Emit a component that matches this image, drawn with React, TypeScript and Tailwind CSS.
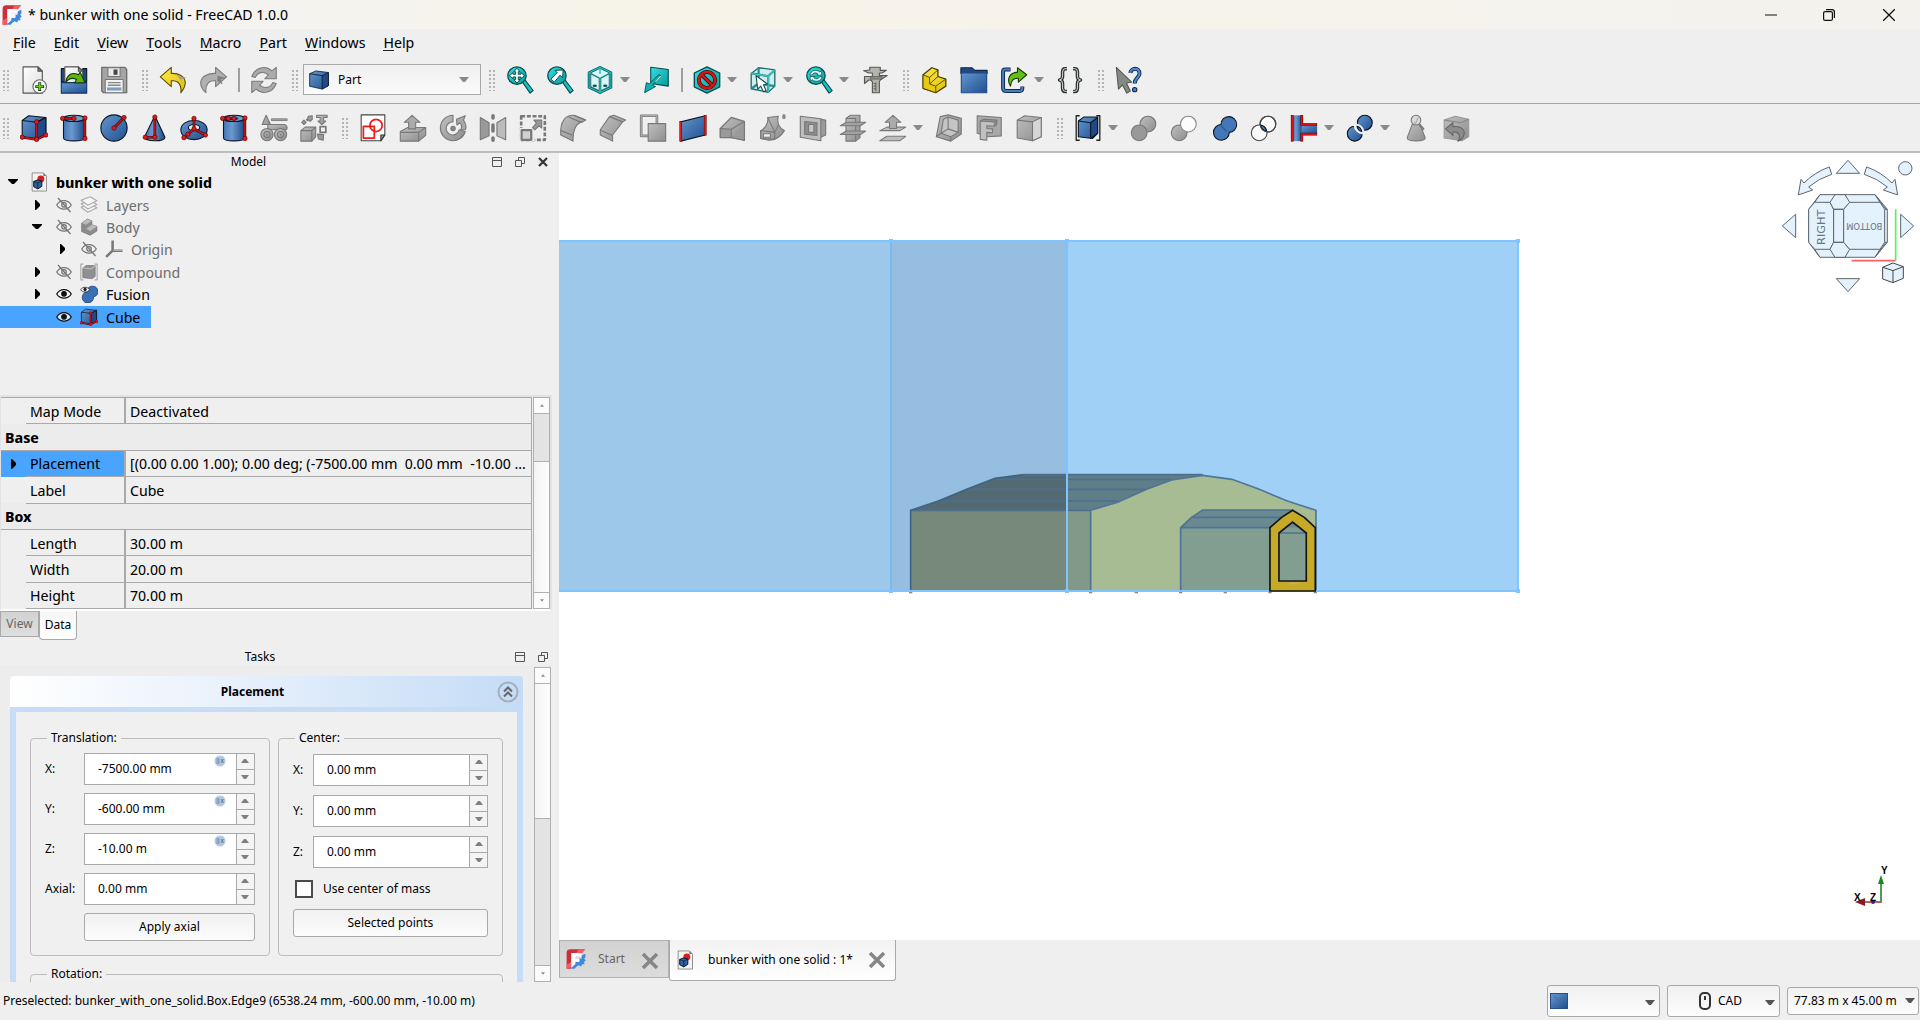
import React from "react";

type Kids = { children?: React.ReactNode };

const INK = "#0b1521";
const OFF = "#787878";

function Defs() {
  return (
    <svg className="absolute h-0 w-0" aria-hidden="true">
      <defs>
        <linearGradient id="blue" x1="0" y1="0" x2="1" y2="1">
          <stop offset="0" stopColor="#6497cf" />
          <stop offset="1" stopColor="#204f8f" />
        </linearGradient>
        <linearGradient id="blueH" x1="0" y1="0" x2="1" y2="0">
          <stop offset="0" stopColor="#4576b5" />
          <stop offset="0.4" stopColor="#6a9ad0" />
          <stop offset="1" stopColor="#204a87" />
        </linearGradient>
        <linearGradient id="grey" x1="0" y1="0" x2="1" y2="1">
          <stop offset="0" stopColor="#c0c0c0" />
          <stop offset="1" stopColor="#8d8d8d" />
        </linearGradient>
        <linearGradient id="teal" x1="0" y1="0" x2="1" y2="1">
          <stop offset="0" stopColor="#34e0e2" />
          <stop offset="1" stopColor="#069a9c" />
        </linearGradient>
        <linearGradient id="page" x1="0" y1="0" x2="1" y2="1">
          <stop offset="0" stopColor="#ffffff" />
          <stop offset="1" stopColor="#dcdcdc" />
        </linearGradient>
        <linearGradient id="yellow" x1="0" y1="0" x2="1" y2="1">
          <stop offset="0" stopColor="#fce94f" />
          <stop offset="1" stopColor="#e3c200" />
        </linearGradient>
      </defs>
    </svg>
  );
}

function Svg({ children, size = "size-7" }: Kids & { size?: string }) {
  return (
    <svg viewBox="0 0 64 64" className={`${size} shrink-0`} fill="none" strokeWidth="2.5" strokeLinejoin="round" aria-hidden="true">
      {children}
    </svg>
  );
}

function RedPath({ d, dots }: { d: string; dots: number[][] }) {
  return (
    <>
      <path d={d} stroke="#3a0606" strokeWidth="6" />
      <path d={d} stroke="#cc1414" strokeWidth="3.5" />
      {dots.map(([x, y], i) => (
        <circle key={i} cx={x} cy={y} r="5" fill="#e01b1b" stroke="#5a0000" strokeWidth="1.5" />
      ))}
    </>
  );
}

/* ---------- file and view icons ---------- */

const NewIcon = () => (
  <Svg>
    <path d="M7 2H41L51 12V62H7Z" fill="url(#page)" stroke="#555" />
    <path d="M41 2V12H51Z" fill="#777" stroke="#555" />
    <circle cx="45" cy="47" r="15.5" fill="#f4f4f4" stroke="#666" />
    <path d="M45 37V57M35 47H55" stroke="#173a04" strokeWidth="6.5" />
    <path d="M45 39V55M37 47H53" stroke="#73d216" strokeWidth="3.5" />
  </Svg>
);
const OpenIcon = () => (
  <Svg>
    <path d="M3 6H12V36H3ZM52 6H61V36H52Z" fill="#204a87" stroke={INK} />
    <path d="M11 2H42L52 12V44H11Z" fill="url(#page)" stroke="#555" />
    <path d="M42 2V12H52Z" fill="#888" stroke="#555" />
    <path d="M3 38H61V62H3Z" fill="url(#blue)" stroke="#143463" />
    <path d="M13 38C15 22 26 12 42 20L46 14L57 38L33 39L38 31C27 25 19 29 13 38Z" fill="#5cb512" stroke="#173a04" />
  </Svg>
);
const SaveIcon = () => (
  <Svg>
    <path d="M4 3H57L61 8V61H8L4 57Z" fill="#a5a5a5" stroke="#6e6e6e" strokeWidth="3" />
    <rect x="18" y="4" width="28" height="20" fill="#e8e8e8" stroke="#777" />
    <rect x="31" y="8" width="9" height="12" fill="#444" />
    <rect x="12" y="31" width="41" height="30" fill="#f2f2f2" stroke="#777" />
    <path d="M18 38H47M18 44H47" stroke="#888" strokeWidth="3" />
    <rect x="16" y="49" width="33" height="7" fill="#7d9cc4" />
  </Svg>
);
const UndoIcon = () => (
  <Svg>
    <path d="M28 3L3 25L28 47V34C44 32 52 42 50 61C54 56 61 46 60 36C58 24 46 16 28 17Z" fill="url(#yellow)" stroke="#5a4d00" />
    <path d="M40 20L63 27L50 31L56 42Z" fill="#999" opacity="0.8" />
  </Svg>
);
const RedoIcon = () => (
  <Svg>
    <path d="M38 3L63 25L38 47V34C22 32 14 42 16 61C10 56 3 46 4 36C6 24 20 16 38 17Z" fill="#b0b0b0" stroke="#7c7c7c" />
    <path d="M42 22L62 27L50 31L54 42L42 34Z" fill="#808080" />
  </Svg>
);
const RefreshIcon = () => (
  <Svg>
    <path d="M4 24C12 2 36 -2 50 11L60 3V29H34L42 20C30 11 18 14 12 26Z" fill="#ababab" stroke="#7c7c7c" />
    <path d="M60 40C52 62 28 66 14 53L4 61V35H30L22 44C34 53 46 50 52 38Z" fill="#ababab" stroke="#7c7c7c" />
  </Svg>
);

function Lens({ children }: Kids) {
  return (
    <Svg>
      <path d="M36 34L42 30L62 56L55 62Z" fill="#16c5c8" stroke="#064b4c" />
      <ellipse cx="25" cy="22" rx="21" ry="20" fill="url(#teal)" stroke="#064b4c" strokeWidth="3" />
      {children}
    </Svg>
  );
}
const FitAllIcon = () => (
  <Lens>
    <path d="M25 5L32 13H28V19H34V15L42 22L34 29V25H28V31H32L25 39L18 31H22V25H16V29L8 22L16 15V19H22V13H18Z" fill="#fff" stroke="#053b3c" strokeWidth="2" />
  </Lens>
);
const FitSelIcon = () => (
  <Lens>
    <path d="M39 9L38 27L32 21L19 37L11 30L26 15L20 10Z" fill="#fff" stroke="#053b3c" strokeWidth="2" />
  </Lens>
);
const SyncViewIcon = () => (
  <Lens>
    <path d="M11 20C13 10 27 7 34 14L38 10V21H27L30 18C25 14 19 15 16 21ZM39 25C37 35 23 38 16 31L12 35V24H23L20 27C25 31 31 30 34 24Z" fill="#e8ffff" stroke="#053b3c" strokeWidth="1.5" />
  </Lens>
);
const IsoIcon = () => (
  <Svg>
    <path d="M32 3L57 15V49L32 61L7 49V15Z" fill="#d9f7f7" stroke="#054a4c" strokeWidth="6" />
    <path d="M32 3L57 15V49L32 61L7 49V15ZM7 15L32 28L57 15M32 28V61M32 3V18" stroke="#17b9bc" strokeWidth="3" />
    <path d="M11 18L30 28V56L11 47Z M34 28L53 18V47L34 56Z" stroke="#054a4c" strokeWidth="1.5" />
    <ellipse cx="20" cy="45" rx="5" ry="3" fill="#06595b" />
    <ellipse cx="44" cy="45" rx="5" ry="3" fill="#06595b" />
  </Svg>
);
const AlignIcon = () => (
  <Svg>
    <path d="M20 3L60 8V46L20 40Z" fill="url(#teal)" stroke="#054a4c" />
    <path d="M44 22L24 44L31 47L6 61L10 38L17 41L38 20Z" fill="#0fb1b4" stroke="#054a4c" strokeWidth="2" />
    <path d="M31 36L44 22" stroke="#eaffff" strokeWidth="2" />
  </Svg>
);
const DrawStyleIcon = () => (
  <Svg>
    <path d="M32 2L61 16V48L32 62L3 48V16Z" fill="url(#teal)" stroke="#054a4c" strokeWidth="3" />
    <circle cx="32" cy="32" r="18.500" stroke="#3a0606" strokeWidth="9" />
    <path d="M19 19L45 45" stroke="#3a0606" strokeWidth="9" />
    <circle cx="32" cy="32" r="18.500" stroke="#d11515" strokeWidth="6" />
    <path d="M19 19L45 45" stroke="#d11515" strokeWidth="6" />
  </Svg>
);
const BoxSelectIcon = () => (
  <Svg>
    <path d="M5 17L22 4L59 9V46L44 60L5 52Z" fill="#cfeeee" stroke="#1c6a6b" strokeWidth="3" />
    <path d="M5 17L44 23L59 9M44 23V60M22 4V40L5 52M22 40L59 46" stroke="#2a8b8d" strokeWidth="5" />
    <path d="M5 17L44 23L59 9M44 23V60" stroke="#45c8ca" strokeWidth="2.500" />
    <path d="M16 22L20 53L27 46L33 59L39 56L33 43L42 41Z" fill="#fff" stroke="#174d4e" />
  </Svg>
);
const CaliperIcon = () => (
  <Svg>
    <path d="M20 3H44V10H58L48 16H42V22H60L44 32L42 36V61H26V36L22 32H18L8 40V24H26V16H18L6 11L20 9Z" fill="#b4b4ac" stroke="#555753" />
    <path d="M34 38V58M29 40H34M29 46H34M29 52H34" stroke="#555753" strokeWidth="2" />
    <path d="M22 24H48V30H22Z" fill="#8a8a84" stroke="#555753" strokeWidth="1.500" />
  </Svg>
);
const StdPartIcon = () => (
  <Svg>
    <path d="M7 20L27 4L41 9V24L59 30V46L36 61L7 51Z" fill="url(#yellow)" stroke="#4a4000" strokeWidth="3" />
    <path d="M7 20L22 26V41L36 46V61L7 51Z" fill="#e6cb10" stroke="#4a4000" strokeWidth="2" />
    <path d="M22 26L41 9M36 46L59 30M22 41L41 24" stroke="#4a4000" strokeWidth="2" />
  </Svg>
);
const GroupIcon = () => (
  <Svg>
    <path d="M2 4H27L34 10H62V17H2Z" fill="#204a87" stroke="#10284a" />
    <rect x="3" y="16" width="58" height="45" fill="url(#blue)" stroke="#204a87" />
  </Svg>
);
const LinkIcon = () => (
  <Svg>
    <path d="M24 8H12Q7 8 7 13V50Q7 57 14 57H45Q51 57 51 51V47" stroke="#0e2a50" strokeWidth="9" />
    <path d="M24 8H12Q7 8 7 13V50Q7 57 14 57H45Q51 57 51 51V47" stroke="#4a7ebb" strokeWidth="4.500" />
    <path d="M40 4L61 20L42 37V28C30 27 25 36 24 46C14 30 22 15 40 14Z" fill="#64bf14" stroke="#173a04" />
  </Svg>
);
const BracesIcon = () => (
  <Svg>
    {["#2e3436", "#eeeeec"].map((c, i) => (
      <path key={c} d="M25 6H21Q15 6 15 14V23Q15 32 8 32Q15 32 15 41V50Q15 58 21 58H25M39 6H43Q49 6 49 14V23Q49 32 56 32Q49 32 49 41V50Q49 58 43 58H39" stroke={c} strokeWidth={i ? 2 : 8} />
    ))}
  </Svg>
);
const WhatsThisIcon = () => (
  <Svg>
    <path d="M3 3L8 53L17 43L27 62L35 57L26 39L38 37Z" fill="#868a86" stroke="#555753" />
    <path d="M35 16C36 4 56 2 56 17C56 27 45 27 45 40" stroke="#10284a" strokeWidth="9" />
    <path d="M35 16C36 4 56 2 56 17C56 27 45 27 45 40" stroke="#4f86c6" strokeWidth="5" />
    <circle cx="45" cy="54" r="5" fill="#4f86c6" stroke="#10284a" />
  </Svg>
);

/* ---------- part workbench icons ---------- */

const CubeIcon = ({ size }: { size?: string }) => (
  <Svg size={size}>
    <path d="M5 15L20 4L59 8V47L38 59L5 52Z" fill="url(#blue)" stroke={INK} />
    <path d="M38 19L59 8V47L38 59Z" fill="#204a87" stroke={INK} />
    <path d="M5 15L38 19L59 8" stroke={INK} />
    <RedPath d="M38 18V58M5 53L38 58L59 48" dots={[[38, 18], [5, 53], [38, 58], [59, 48]]} />
  </Svg>
);
const CylinderIcon = () => (
  <Svg>
    <path d="M8 10V54C8 64 56 64 56 54V10Z" fill="url(#blueH)" stroke={INK} />
    <ellipse cx="32" cy="10" rx="24" ry="7" fill="#729fcf" stroke={INK} />
    <RedPath d="M6 10H32M57 9V56" dots={[[6, 10], [32, 10], [57, 9], [57, 56]]} />
  </Svg>
);
const SphereIcon = () => (
  <Svg>
    <circle cx="32" cy="32" r="30" fill="url(#blue)" stroke={INK} />
    <RedPath d="M32 32L55 8" dots={[[32, 32], [55, 8]]} />
  </Svg>
);
const ConeIcon = () => (
  <Svg>
    <path d="M34 4L57 53C57 64 12 64 10 53Z" fill="url(#blueH)" stroke={INK} />
    <RedPath d="M34 7V53H12" dots={[[34, 7], [34, 53], [12, 53]]} />
  </Svg>
);
const TorusIcon = () => (
  <Svg>
    <path d="M2 36C2 8 62 8 62 36C62 66 2 66 2 36Z" fill="url(#blue)" stroke={INK} />
    <ellipse cx="32" cy="31" rx="13" ry="7" fill="#efefef" stroke={INK} />
    <RedPath d="M32 10V34L9 54M32 34L58 48" dots={[[32, 10], [32, 34], [9, 54], [58, 48], [18, 46]]} />
  </Svg>
);
const TubeIcon = () => (
  <Svg>
    <path d="M8 10V54C8 64 56 64 56 54V10Z" fill="url(#blueH)" stroke={INK} />
    <ellipse cx="32" cy="10" rx="24" ry="7" fill="#729fcf" stroke={INK} />
    <ellipse cx="30" cy="10" rx="12" ry="4" fill="#1c3f72" />
    <RedPath d="M6 10H32M57 9V56" dots={[[6, 10], [19, 10], [32, 10], [57, 9], [57, 56]]} />
  </Svg>
);
const PrimitivesIcon = () => (
  <Svg>
    <path d="M14 3L24 24H5Z" fill="url(#grey)" stroke={OFF} />
    <rect x="26" y="11" width="36" height="4" fill="#aaa" stroke={OFF} strokeWidth="2" />
    <path d="M18 24H56Q62 26 62 32T52 36H18Z" fill="url(#grey)" stroke={OFF} />
    <circle cx="16" cy="47" r="14" fill="url(#grey)" stroke={OFF} />
    <circle cx="47" cy="47" r="14" fill="url(#grey)" stroke={OFF} />
    <circle cx="16" cy="47" r="7" stroke={OFF} />
    <circle cx="47" cy="47" r="7" stroke={OFF} />
    <circle cx="16" cy="47" r="2" fill={OFF} />
    <circle cx="47" cy="47" r="2" fill={OFF} />
  </Svg>
);
const ShapeBuilderIcon = () => (
  <Svg>
    <path d="M2 38L12 30H36V52L27 62H2Z" fill="url(#grey)" stroke={OFF} />
    <path d="M2 38H27V62M27 38L36 30" stroke={OFF} />
    <path d="M9 14L14 19L9 24L4 19ZM14 12L18 16M19 5L28 4V12L23 17L17 12Z" fill="#999" stroke={OFF} />
    <path d="M38 3H62V8H54V16H59L50 24L41 16H46V8H38Z" fill="url(#grey)" stroke={OFF} />
    <rect x="46" y="29" width="13" height="13" stroke={OFF} strokeWidth="4" />
    <path d="M40 46L54 47L53 60L42 57Z" fill="#999" stroke={OFF} />
  </Svg>
);
const SketchIcon = () => (
  <Svg>
    <path d="M5 2H59V48L50 61H5Z" fill="#fff" stroke="#444" />
    <path d="M59 48H50V61Z" fill="#8a9a88" stroke="#333" />
    <rect x="10" y="28" width="25" height="27" stroke="#ee1c1c" strokeWidth="4" />
    <circle cx="39" cy="26" r="14" stroke="#ee1c1c" strokeWidth="4" />
  </Svg>
);
const ExtrudeIcon = () => (
  <Svg>
    <path d="M3 40L20 31H61V49L45 62H3Z" fill="url(#grey)" stroke={OFF} />
    <path d="M3 42H45V62M45 42L61 31" stroke={OFF} />
    <path d="M30 3L48 19H38V34H22V19H12Z" fill="#ababab" stroke={OFF} />
  </Svg>
);
const RevolveIcon = () => (
  <Svg>
    <path d="M32 3V18A15 15 0 1 0 46 36L60 40A29 29 0 1 1 32 3Z" fill="url(#grey)" stroke={OFF} />
    <circle cx="32" cy="33" r="5" fill="#888" stroke={OFF} />
    <path d="M40 12L60 4L56 14Q65 27 60 36H50Q54 27 48 20L41 25Z" fill="#aaa" stroke={OFF} />
  </Svg>
);
const MirrorIcon = () => (
  <Svg>
    <path d="M3 8L23 20V50L3 59Z" fill="#999" stroke={OFF} />
    <path d="M61 8L41 20V50L61 59Z" fill="#bcbcbc" stroke={OFF} />
    <path d="M32 4V9M32 25V39M32 55V60" stroke={OFF} strokeWidth="8" strokeLinecap="round" />
  </Svg>
);
const ScaleIcon = () => (
  <Svg>
    <rect x="5" y="5" width="54" height="54" stroke={OFF} strokeWidth="6" strokeDasharray="9 4" />
    <path d="M2 32H36V62H2Z" fill="#efefef" />
    <rect x="6" y="37" width="22" height="22" fill="#d0d0d0" stroke={OFF} strokeWidth="5" />
    <path d="M34 14H52V32L46 27L36 36L31 31L40 21Z" fill="#999" stroke={OFF} />
  </Svg>
);
const FilletIcon = () => (
  <Svg>
    <path d="M4 48C2 18 14 2 34 3L61 14L54 18C40 20 32 32 32 62Z" fill="url(#grey)" stroke={OFF} />
    <path d="M4 38L30 48M22 7L48 18L54 18M34 3L61 14" stroke={OFF} />
  </Svg>
);
const ChamferIcon = () => (
  <Svg>
    <path d="M3 48V36L24 6L34 3L61 14L54 18L31 48V62Z" fill="url(#grey)" stroke={OFF} />
    <path d="M3 37L31 49M24 6L54 18" stroke={OFF} />
  </Svg>
);
const FaceIcon = () => (
  <Svg>
    <rect x="5" y="4" width="36" height="46" stroke={OFF} strokeWidth="6" />
    <rect x="5" y="4" width="36" height="46" stroke="#c4c4c4" strokeWidth="2" />
    <rect x="21" y="22" width="40" height="40" fill="url(#grey)" stroke={OFF} />
  </Svg>
);
const RuledIcon = () => (
  <Svg>
    <path d="M4 18L60 4V48L4 62Z" fill="url(#blue)" stroke={INK} />
    <path d="M4 16V63M60 2V49" stroke="#5a0000" strokeWidth="6" />
    <path d="M4 17V62M60 3V48" stroke="#e01b1b" strokeWidth="4" />
  </Svg>
);
const LoftIcon = () => (
  <Svg>
    <path d="M3 33L28 8L58 17V60L33 54L3 53Z" fill="url(#grey)" stroke={OFF} strokeWidth="3" />
    <path d="M3 33L28 35V54H3ZM28 35L58 17M58 17V60L28 54" fill="#9a9a9a" stroke={OFF} />
  </Svg>
);
const SweepIcon = () => (
  <Svg>
    <path d="M4 38C14 34 22 20 20 8L44 5C40 22 48 34 58 38C50 52 36 60 22 60L4 56Z" fill="url(#grey)" stroke={OFF} />
    <path d="M4 38L36 42V58L4 56ZM36 42L44 26M20 8L36 42" stroke={OFF} />
    <rect x="10" y="45" width="16" height="8" fill="#efefef" stroke={OFF} />
    <ellipse cx="57" cy="6" rx="4" ry="6" fill="#888" />
  </Svg>
);
const SectionIcon = () => (
  <Svg>
    <path d="M36 10L61 14V48L48 54Z" fill="#9a9a9a" stroke={OFF} />
    <path d="M3 5L50 11V61L3 53Z" fill="#bdbdbd" stroke={OFF} />
    <path d="M13 17L41 20V49L13 46Z" fill="#8d8d8d" stroke={OFF} />
    <path d="M22 24H34V42H22Z" fill="#c8c8c8" stroke={OFF} />
  </Svg>
);
const CrossSectionsIcon = () => (
  <Svg>
    <path d="M16 10L26 3H48V54L38 62H16Z" fill="url(#grey)" stroke={OFF} />
    {[19, 39].map((y) => (
      <path key={y} d={`M3 ${y + 8}L17 ${y}H61L49 ${y + 8}Z`} fill="#a2a2a2" stroke={OFF} />
    ))}
    <path d="M16 10H38V19M38 28V39M38 48V62" stroke={OFF} />
  </Svg>
);
const OffsetIcon = () => (
  <Svg>
    <path d="M2 38L18 30H61L48 38ZM2 61L18 51H61L48 61Z" fill="#bdbdbd" stroke={OFF} />
    <path d="M32 3L50 19H40V33H24V19H14Z" fill="#ababab" stroke={OFF} />
  </Svg>
);
const ThicknessIcon = () => (
  <Svg>
    <path d="M12 6L30 2L60 10V46L36 62L3 52Z" fill="url(#grey)" stroke={OFF} />
    <path d="M19 12L30 7L53 14V42L36 52L14 44ZM30 7V34L14 44M30 34L53 42" fill="#c4c4c4" stroke={OFF} />
    <path d="M3 52L14 44M36 62V52" stroke={OFF} />
  </Svg>
);
const ProjectionIcon = () => (
  <Svg>
    <path d="M5 4L60 8V50L30 52L5 44Z" fill="#a8a8a8" stroke={OFF} />
    <path d="M12 16L44 18V28L27 27V33L40 34V43L27 42V60L12 58Z" fill="#c0c0c0" stroke={OFF} />
    <path d="M44 18L50 14V24L44 28M12 16L20 12L50 14" fill="#8d8d8d" stroke={OFF} />
  </Svg>
);
const ColorFaceIcon = () => (
  <Svg>
    <path d="M5 14L22 4L60 8V52L40 61L5 55Z" fill="url(#grey)" stroke={OFF} />
    <path d="M40 18L60 8V52L40 61Z" fill="#d6d6d6" stroke={OFF} />
    <path d="M5 14L40 18" stroke={OFF} />
  </Svg>
);
const CompoundIcon = () => (
  <Svg>
    <path d="M13 4H5V60H13M51 4H59V60H51" stroke="#222" strokeWidth="3" />
    <path d="M10 16L22 7H54V44L42 56L10 52Z" fill="url(#blue)" stroke={INK} />
    <path d="M38 20L54 8V44L38 56Z" fill="#204a87" stroke={INK} />
    <path d="M10 16L38 20" stroke={INK} />
  </Svg>
);
const BooleanIcon = () => (
  <Svg>
    <circle cx="41" cy="23" r="18" fill="url(#grey)" stroke={OFF} />
    <circle cx="21" cy="43" r="18" fill="#999" stroke={OFF} />
  </Svg>
);
const CutIcon = () => (
  <Svg>
    <circle cx="21" cy="43" r="18" fill="url(#grey)" stroke={OFF} />
    <circle cx="42" cy="23" r="18" fill="#fcfcfc" stroke="#8a8a8a" />
  </Svg>
);
const UNION = "M25 24A18 18 0 1 1 44 42A18 18 0 1 1 25 24Z";
const UnionIcon = () => (
  <Svg>
    <path d={UNION} fill="#4377b8" stroke={INK} />
    <path d="M26 27L38 40" stroke="#2d5a96" strokeWidth="3" />
  </Svg>
);
const CommonIcon = () => (
  <Svg>
    <circle cx="41" cy="23" r="18" fill="#fafafa" stroke="#444" />
    <circle cx="21" cy="43" r="18" fill="#fafafa" stroke="#444" />
    <path d="M24 25A18 18 0 0 1 38 40A18 18 0 0 1 24 25Z" fill="#4377b8" stroke={INK} />
    <circle cx="41" cy="23" r="18" stroke="#444" />
  </Svg>
);
const JoinIcon = () => (
  <Svg>
    <path d="M27 24H62V46H27Z" fill="url(#blue)" />
    <path d="M5 3H27V62H5Z" fill="url(#blueH)" />
    <path d="M5 2V63M27 2V24H62M27 63V46H62" stroke="#5a0000" strokeWidth="6" strokeLinejoin="miter" />
    <path d="M5 3V62M27 3V24H61M27 62V46H61" stroke="#dd1111" strokeWidth="4" strokeLinejoin="miter" />
  </Svg>
);
const SplitIcon = () => (
  <Svg>
    <circle cx="43" cy="20" r="17" fill="url(#blue)" stroke={INK} />
    <circle cx="20" cy="45" r="17" fill="url(#blue)" stroke={INK} />
    <path d="M22 26A17 17 0 0 1 38 42A17 17 0 0 1 22 26Z" fill="#efefef" stroke="#efefef" strokeWidth="9" />
    <path d="M25 28A15 15 0 0 1 36 40A15 15 0 0 1 25 28Z" fill="#4377b8" stroke={INK} />
  </Svg>
);
const CheckGeomIcon = () => (
  <Svg>
    <path d="M24 22H40L53 54C53 64 12 64 12 54Z" fill="url(#grey)" stroke={OFF} />
    <path d="M40 24L50 36" stroke={OFF} strokeWidth="5" />
    <circle cx="32" cy="14" r="11" fill="#dadada" stroke={OFF} />
    <path d="M28 18L31 22L37 8" stroke="#aaa" />
  </Svg>
);
const DefeatureIcon = () => (
  <Svg>
    <path d="M5 14L30 5L61 12V52L45 61L5 55Z" fill="url(#grey)" stroke="#9a9a9a" />
    <path d="M5 14L44 20L61 12" stroke="#888" />
    <path d="M8 34L25 20V29C42 26 54 36 50 48C48 56 42 60 36 62C44 52 40 40 25 41V49Z" fill="#8c8c8c" stroke="#666" />
  </Svg>
);

/* ---------- small icons ---------- */

const AppLogo = () => (
  <Svg size="size-5">
    <path d="M14 1H60L50 14H18V60L14 63H2V12Q2 1 14 1Z" fill="#cb2f3a" />
    <path d="M40 1H62L50 14H32ZM2 50L18 40V56L8 63H2Z" fill="#ff585f" />
    <path d="M50 20L62 15V27L58 30L63 37L57 42L60 49L52 49L48 56L41 52L33 57L28 63H14L28 48V41H42V31H50Z" fill="#3f8ae0" />
    <path d="M17 13H50V24H30V31H43V41H30V48L17 60Z" fill="#fff" />
  </Svg>
);
const DocIcon = () => (
  <Svg size="size-5">
    <path d="M10 3H46L56 13V61H10Z" fill="#f4f4ee" stroke="#777" />
    <path d="M46 3V13H56Z" fill="#777" />
    <circle cx="38" cy="22" r="11" fill="#d81e1e" />
    <path d="M15 30L28 25L41 29V46L28 54L15 47Z" fill="#2c5fa5" stroke={INK} strokeWidth="3" />
    <path d="M15 30L28 35L41 29M28 35V54" stroke={INK} strokeWidth="2" />
  </Svg>
);
const EyeIcon = ({ off = false }: { off?: boolean }) => (
  <Svg size="size-4">
    <g opacity={off ? 0.55 : 1}>
      <path d="M3 32C16 8 48 8 61 32C48 54 16 54 3 32Z" fill={off ? "none" : "#fff"} fillOpacity="0.75" stroke="#111" strokeWidth="5" />
      <circle cx="32" cy="31" r="9" fill={off ? "none" : "#111"} stroke="#111" strokeWidth="5" />
      {off && <path d="M8 4L58 60" stroke="#111" strokeWidth="5" />}
    </g>
  </Svg>
);
const LayersIcon = () => (
  <Svg size="size-[18px]">
    {[44, 32, 19].map((y) => (
      <path key={y} d={`M4 ${y - 4}L36 ${y - 16}L60 ${y - 2}L28 ${y + 14}Z`} fill="#f6f6f6" stroke="#aaa" strokeWidth="4" />
    ))}
  </Svg>
);
const BodyIcon = () => (
  <Svg size="size-[18px]">
    <path d="M6 18L26 4L42 10V24L60 30V46L36 61L6 48Z" fill="#8c8c8c" stroke="#7a7a7a" strokeWidth="3" />
    <path d="M6 18L26 4L42 10L22 24ZM22 38L42 24L60 30L36 46Z" fill="#bbb" />
  </Svg>
);
const OriginIcon = () => (
  <Svg size="size-[18px]">
    <path d="M27 2V38H62M27 38L4 60" stroke="#777" strokeWidth="9" strokeLinejoin="miter" />
    <path d="M30 36H62" stroke="#bbb" strokeWidth="5" />
  </Svg>
);
const CompoundTreeIcon = () => (
  <Svg size="size-[18px]">
    <path d="M12 4H3V60H12M52 4H61V60H52" stroke="#aaa" strokeWidth="4" />
    <path d="M10 18L22 9H54V48L42 56L10 52Z" fill="#8f8f8f" stroke="#787878" />
    <path d="M10 18L40 21L54 9" stroke="#bbb" strokeWidth="4" />
  </Svg>
);
const FusionIcon = () => (
  <Svg size="size-[18px]">
    <path d="M26 18A19 19 0 1 1 48 42A20 20 0 1 1 14 30Z" fill="#3a70b5" stroke="#1c4377" strokeWidth="3" />
    <path d="M2 17C10 5 26 5 34 17C26 28 10 28 2 17Z" fill="#fff" stroke="#222" strokeWidth="3" />
    <circle cx="18" cy="16" r="6" fill="#222" />
  </Svg>
);
const PartBoxIcon = () => (
  <Svg size="size-5">
    <path d="M2 12L22 3L62 8V50L42 61L2 52Z" fill="url(#blue)" stroke={INK} />
    <path d="M42 18L62 8V50L42 61Z" fill="#204a87" stroke={INK} />
    <path d="M2 12L42 18" stroke={INK} />
  </Svg>
);

/* ---------- toolbar parts ---------- */

function Handle() {
  return (
    <span className="flex w-[19px] shrink-0 items-center justify-end pr-1">
      <svg viewBox="0 0 8 22" className="h-[22px] w-2" aria-hidden="true">
        <path d="M2 1V22M6 1V22" stroke="#b4b4b4" strokeWidth="2" strokeDasharray="2 2" />
      </svg>
    </span>
  );
}
function Tool({ name, children }: Kids & { name: string }) {
  return (
    <button type="button" aria-label={name} className="flex h-10 w-10 shrink-0 items-center justify-center">
      {children}
    </button>
  );
}
function More({ name }: { name: string }) {
  return (
    <button type="button" aria-label={name} className="flex h-10 w-4 shrink-0 items-center justify-start">
      <Down />
    </button>
  );
}
function Down({ dark = false }: { dark?: boolean }) {
  return (
    <svg viewBox="0 0 10 6" className="h-[6px] w-[10px] shrink-0" aria-hidden="true">
      <path d="M0 0H10L6 5H4Z" fill={dark ? "#555" : "#8a8a8a"} />
    </svg>
  );
}
function Divider() {
  return (
    <span className="flex w-[11px] shrink-0 justify-center">
      <span className="h-6 w-[2px] bg-[#9f9f9f]" />
    </span>
  );
}

function TitleBar() {
  return (
    <header className="flex h-[29px] items-center bg-linear-to-r from-[#f3f3f5] via-[#f7f3e8] via-35% to-[#f3f2ee] pl-[2px]">
      <AppLogo />
      <h1 className="ml-1.5 flex-1 pb-0.5 text-[15px] leading-5">* bunker with one solid - FreeCAD 1.0.0</h1>
      <button type="button" aria-label="Minimize" className="flex h-full w-[58px] items-center justify-center">
        <svg viewBox="0 0 12 12" className="size-3"><path d="M0 6H12" stroke="#111" /></svg>
      </button>
      <button type="button" aria-label="Restore" className="flex h-full w-[58px] items-center justify-center">
        <svg viewBox="0 0 12 12" className="size-3" fill="none" stroke="#111" strokeWidth="1.200">
          <rect x="0.6" y="2.600" width="8.800" height="8.800" rx="1.500" />
          <path d="M3 0.600H9Q11.400 0.600 11.400 3V9" />
        </svg>
      </button>
      <button type="button" aria-label="Close" className="flex h-full w-[62px] items-center justify-center">
        <svg viewBox="0 0 12 12" className="size-3"><path d="M0 0L12 12M12 0L0 12" stroke="#111" strokeWidth="1.300" /></svg>
      </button>
    </header>
  );
}

function MenuBar() {
  return (
    <nav className="flex h-[27px] items-center gap-[18px] pl-[13px] text-[15px] leading-4">
      {["File", "Edit", "View", "Tools", "Macro", "Part", "Windows", "Help"].map((m) => (
        <button key={m} type="button" className="flex">
          <span className="border-b border-[#222]">{m[0]}</span>{m.slice(1)}
        </button>
      ))}
    </nav>
  );
}

function ToolbarTop() {
  return (
    <div className="flex h-12 items-center border-b border-[#a6a6a6]">
      <span className="-ml-[5px] flex"><Handle /></span>
      <Tool name="New"><NewIcon /></Tool>
      <Tool name="Open"><OpenIcon /></Tool>
      <Tool name="Save"><SaveIcon /></Tool>
      <Handle />
      <Tool name="Undo"><UndoIcon /></Tool>
      <Tool name="Redo"><RedoIcon /></Tool>
      <Divider />
      <Tool name="Refresh"><RefreshIcon /></Tool>
      <Handle />
      <label className="relative flex h-[31px] w-[178px] shrink-0 items-center">
        <span className="pointer-events-none absolute left-1.5"><PartBoxIcon /></span>
        <select aria-label="Workbench" className="h-full w-full appearance-none border border-[#a8a8a8] bg-linear-to-b from-[#efefef] to-[#fbfbfb] pl-[34px] font-['Noto_Sans'] text-xs">
          <option>Part</option>
        </select>
        <span className="pointer-events-none absolute right-3 flex"><Down /></span>
      </label>
      <Handle />
      <Tool name="Fit all"><FitAllIcon /></Tool>
      <Tool name="Fit selection"><FitSelIcon /></Tool>
      <Tool name="Isometric"><IsoIcon /></Tool>
      <More name="Views" />
      <Tool name="Align to selection"><AlignIcon /></Tool>
      <Divider />
      <Tool name="Draw style"><DrawStyleIcon /></Tool>
      <More name="Draw styles" />
      <Tool name="Box selection"><BoxSelectIcon /></Tool>
      <More name="Selection modes" />
      <Tool name="Sync view"><SyncViewIcon /></Tool>
      <More name="Selection views" />
      <Tool name="Measure"><CaliperIcon /></Tool>
      <Handle />
      <Tool name="Create part"><StdPartIcon /></Tool>
      <Tool name="Create group"><GroupIcon /></Tool>
      <Tool name="Make link"><LinkIcon /></Tool>
      <More name="Link actions" />
      <Tool name="Variable set"><BracesIcon /></Tool>
      <Handle />
      <Tool name="What's this"><WhatsThisIcon /></Tool>
    </div>
  );
}

function ToolbarPart() {
  return (
    <div className="flex h-[49px] items-center border-b-2 border-[#bdbfbd]">
      <span className="-ml-[5px] flex"><Handle /></span>
      <Tool name="Cube"><CubeIcon /></Tool>
      <Tool name="Cylinder"><CylinderIcon /></Tool>
      <Tool name="Sphere"><SphereIcon /></Tool>
      <Tool name="Cone"><ConeIcon /></Tool>
      <Tool name="Torus"><TorusIcon /></Tool>
      <Tool name="Tube"><TubeIcon /></Tool>
      <Tool name="Primitives"><PrimitivesIcon /></Tool>
      <Tool name="Shape builder"><ShapeBuilderIcon /></Tool>
      <Handle />
      <Tool name="Sketch"><SketchIcon /></Tool>
      <Tool name="Extrude"><ExtrudeIcon /></Tool>
      <Tool name="Revolve"><RevolveIcon /></Tool>
      <Tool name="Mirror"><MirrorIcon /></Tool>
      <Tool name="Scale"><ScaleIcon /></Tool>
      <Tool name="Fillet"><FilletIcon /></Tool>
      <Tool name="Chamfer"><ChamferIcon /></Tool>
      <Tool name="Face from wires"><FaceIcon /></Tool>
      <Tool name="Ruled surface"><RuledIcon /></Tool>
      <Tool name="Loft"><LoftIcon /></Tool>
      <Tool name="Sweep"><SweepIcon /></Tool>
      <Tool name="Section"><SectionIcon /></Tool>
      <Tool name="Cross-sections"><CrossSectionsIcon /></Tool>
      <Tool name="Offset"><OffsetIcon /></Tool>
      <More name="Offsets" />
      <Tool name="Thickness"><ThicknessIcon /></Tool>
      <Tool name="Projection"><ProjectionIcon /></Tool>
      <Tool name="Color per face"><ColorFaceIcon /></Tool>
      <Handle />
      <Tool name="Compound"><CompoundIcon /></Tool>
      <More name="Compound tools" />
      <Tool name="Boolean"><BooleanIcon /></Tool>
      <Tool name="Cut"><CutIcon /></Tool>
      <Tool name="Union"><UnionIcon /></Tool>
      <Tool name="Intersection"><CommonIcon /></Tool>
      <Tool name="Join"><JoinIcon /></Tool>
      <More name="Join tools" />
      <Tool name="Split"><SplitIcon /></Tool>
      <More name="Split tools" />
      <Tool name="Check geometry"><CheckGeomIcon /></Tool>
      <Tool name="Defeaturing"><DefeatureIcon /></Tool>
    </div>
  );
}

/* ---------- side panel ---------- */

function DockHeader({ title, closable = false }: { title: string; closable?: boolean }) {
  return (
    <div className="flex h-[18px] shrink-0 items-center pl-3 pr-[5px]">
      <h2 className="flex-1 text-center font-['Noto_Sans'] text-xs">{title}</h2>
      <button type="button" aria-label={`Shade ${title}`} className="flex w-[23px] justify-center">
        <svg viewBox="0 0 10 10" className="size-2.5" fill="none" stroke="#555"><path d="M0.500 0.500H9.500V9.500H0.500ZM0 3.500H10" /></svg>
      </button>
      <button type="button" aria-label={`Float ${title}`} className="flex w-[23px] justify-center">
        <svg viewBox="0 0 10 10" className="size-2.5" fill="none" stroke="#555"><path d="M0.500 3.500H6.500V9.500H0.500ZM3.500 3.500V0.500H9.500V6.500H6.500" /></svg>
      </button>
      {closable && (
        <button type="button" aria-label={`Close ${title}`} className="flex w-[23px] justify-center">
          <svg viewBox="0 0 10 10" className="size-2.5"><path d="M1 1L9 9M9 1L1 9" stroke="#333" strokeWidth="2.200" /></svg>
        </button>
      )}
    </div>
  );
}

function Twisty({ open }: { open?: boolean }) {
  return (
    <button type="button" aria-label={open ? "Collapse" : "Expand"} className="flex w-6 shrink-0 justify-center">
      <svg viewBox="0 0 10 10" className="size-2.5">
        <path d={open ? "M0 2H10V3L6 7H4L0 3Z" : "M3 0V10H4L8 6V4L4 0Z"} fill="#000" />
      </svg>
    </button>
  );
}

type Node = { label: string; icon: React.ReactNode; pad: string; eye: "on" | "off"; open?: boolean; leaf?: boolean };
const NODES: Node[] = [
  { label: "Layers", icon: <LayersIcon />, pad: "pl-[25px]", eye: "off" },
  { label: "Body", icon: <BodyIcon />, pad: "pl-[25px]", eye: "off", open: true },
  { label: "Origin", icon: <OriginIcon />, pad: "pl-[50px]", eye: "off" },
  { label: "Compound", icon: <CompoundTreeIcon />, pad: "pl-[25px]", eye: "off" },
  { label: "Fusion", icon: <FusionIcon />, pad: "pl-[25px]", eye: "on" },
  { label: "Cube", icon: <CubeIcon size="size-[18px]" />, pad: "pl-[25px]", eye: "on", leaf: true },
];

function ModelTree() {
  return (
    <ul role="tree" aria-label="Model" className="grid h-[157px] shrink-0 auto-rows-fr text-[15px] leading-5">
      <li role="treeitem" className="flex items-center pl-px">
        <Twisty open />
        <span className="ml-1 flex"><DocIcon /></span>
        <span className="ml-[7px] font-bold">bunker with one solid</span>
      </li>
      {NODES.map((n) => (
        <li key={n.label} role="treeitem" aria-selected={n.label === "Cube"} className={`flex items-center justify-self-start pr-[11px] ${n.pad} ${n.label === "Cube" ? "bg-[#49a4ff]" : ""} ${n.eye === "off" ? "text-[#707070]" : "text-black"}`}>
          {n.leaf ? <span className="w-6" /> : <Twisty open={n.open} />}
          <span className="ml-[7px] flex w-6"><EyeIcon off={n.eye === "off"} /></span>
          {n.icon}
          <span className="ml-2">{n.label}</span>
        </li>
      ))}
    </ul>
  );
}

function ArrowBtn({ up = false, name }: { up?: boolean; name: string }) {
  return (
    <button type="button" aria-label={name} className="flex h-[15px] shrink-0 items-center justify-center bg-[#fbfbfb]">
      <svg viewBox="0 0 6 4" className="h-[3px] w-1"><path d={up ? "M0 4L3 0L6 4Z" : "M0 0H6L3 4Z"} fill="#8c8c8c" /></svg>
    </button>
  );
}

type Prop = [string, string?];
const PROPS: Prop[] = [
  ["Map Mode", "Deactivated"],
  ["Base"],
  ["Placement", "[(0.00 0.00 1.00); 0.00 deg; (-7500.00 mm\u00a0 0.00 mm\u00a0 -10.00 ..."],
  ["Label", "Cube"],
  ["Box"],
  ["Length", "30.00 m"],
  ["Width", "20.00 m"],
  ["Height", "70.00 m"],
];

function PropertyPanel() {
  return (
    <section aria-label="Properties" className="mr-[7px] shrink-0">
      <div className="flex h-[216px] border-2 border-l border-[#e2e2e2] border-b-white">
        <table className="h-[212px] flex-1 border-collapse border-r border-t border-[#a9a9a9] text-[15px] leading-5">
          <tbody>
            {PROPS.map(([k, v]) =>
              v === undefined ? (
                <tr key={k} className="bg-[#ececec]">
                  <th colSpan={3} scope="rowgroup" className="border-b border-[#a9a9a9] pl-1 text-left font-bold">{k}</th>
                </tr>
              ) : (
                <tr key={k}>
                  <td className={`w-[25px] p-0 ${k === "Placement" ? "bg-[#49a4ff]" : ""}`}>{k === "Placement" && <Twisty />}</td>
                  <th scope="row" className={`w-[99px] border-b border-[#a9a9a9] pl-1 text-left font-normal ${k === "Placement" ? "bg-[#49a4ff]" : ""}`}>{k}</th>
                  <td className="whitespace-nowrap border-b border-l-2 border-[#a9a9a9] pl-1">{v}</td>
                </tr>
              ),
            )}
          </tbody>
        </table>
        <div className="ml-px flex w-[17px] flex-col border border-[#b0b0b0] bg-[#e3e3e3]">
          <ArrowBtn up name="Scroll up" />
          <div className="h-[48px] border-t border-[#b0b0b0]" />
          <div className="flex-1 border-y border-[#b0b0b0] bg-linear-to-r from-[#f4f4f4] to-[#fdfdfd]" />
          <ArrowBtn name="Scroll down" />
        </div>
      </div>
      <div role="tablist" className="flex items-start font-['Noto_Sans'] text-xs">
        <button type="button" role="tab" aria-selected="false" className="h-[26px] w-[39px] border border-[#a9a9a9] bg-linear-to-b from-[#d2d2d2] to-[#dedede] text-[#666]">View</button>
        <button type="button" role="tab" aria-selected="true" className="h-[29px] w-[38px] rounded-b-sm border border-t-0 border-[#a9a9a9] bg-linear-to-b from-[#f6f6f6] to-white">Data</button>
      </div>
    </section>
  );
}

function SpinBox({ id, value, bound = false }: { id: string; value: string; bound?: boolean }) {
  return (
    <div className="flex h-8 w-full border border-[#a9a9a9] bg-white">
      <div className="relative flex flex-1">
        <input id={id} defaultValue={value} className="w-full min-w-0 bg-transparent pl-[13px] outline-none" />
        {bound && (
          <svg viewBox="0 0 12 12" className="absolute right-2.5 top-px size-3" aria-hidden="true">
            <circle cx="6" cy="6" r="5.500" fill="#b4c8de" />
            <path d="M2.500 4H5.500M2.500 6H5.500M2.500 8H5.500M7 4L9.500 8M9.500 4L7 8" stroke="#5a7ca6" />
          </svg>
        )}
      </div>
      <div className="flex w-[18px] flex-col border-l border-[#a9a9a9] bg-[#f4f4f4]">
        <button type="button" aria-label={`Increase ${id}`} className="flex flex-1 items-center justify-center border-b border-[#a9a9a9]">
          <svg viewBox="0 0 8 4" className="h-1 w-2"><path d="M3 0H5L8 4H0Z" fill="#808080" /></svg>
        </button>
        <button type="button" aria-label={`Decrease ${id}`} className="flex flex-1 items-center justify-center">
          <svg viewBox="0 0 8 4" className="h-1 w-2"><path d="M0 0H8L5 4H3Z" fill="#808080" /></svg>
        </button>
      </div>
    </div>
  );
}

const BTN = "rounded-[3px] border border-[#a9a9a9] bg-linear-to-b from-[#f1f1f1] to-[#fcfcfc]";

function TasksPanel() {
  return (
    <section aria-label="Tasks" className="mt-2 flex min-h-0 flex-1 flex-col">
      <DockHeader title="Tasks" />
      <div className="mr-2 flex min-h-0 flex-1 border-t border-[#eaeaea]">
        <div className="flex min-h-0 flex-1 flex-col overflow-hidden bg-[#ededed] pl-2.5 pr-[11px] pt-[9px] font-['Noto_Sans'] text-xs leading-4">
          <div className="flex h-[31px] shrink-0 items-center rounded-t bg-linear-to-r from-white via-[#eaf2fc] via-40% to-[#c4dcf6] pr-1">
            <h3 className="flex-1 pr-0.5 text-center font-bold">Placement</h3>
            <button type="button" aria-label="Collapse Placement">
              <svg viewBox="0 0 22 22" className="size-[22px]" fill="none">
                <circle cx="11" cy="11" r="9.500" stroke="#a5afba" strokeWidth="2" />
                <path d="M7 10.500L11 6.500L15 10.500M7 15.500L11 11.500L15 15.500" stroke="#666" strokeWidth="2" />
              </svg>
            </button>
          </div>
          <div className="shrink-0 border-x-[6px] border-t-[5px] border-[#c7ddf5] bg-[#f0f0f0] px-3.5 pt-[18px]">
            <div className="flex gap-2">
              <fieldset className="h-[226px] flex-[241] rounded border border-[#bcbcbc] pl-3.5 pr-3.5">
                <legend className="ml-0.5 px-1">Translation:</legend>
                <div className="grid grid-cols-[39px_1fr] items-center gap-y-2 pt-[7px]">
                  <label htmlFor="tx">X:</label><SpinBox id="tx" value="-7500.00 mm" bound />
                  <label htmlFor="ty">Y:</label><SpinBox id="ty" value="-600.00 mm" bound />
                  <label htmlFor="tz">Z:</label><SpinBox id="tz" value="-10.00 m" bound />
                  <label htmlFor="ta">Axial:</label><SpinBox id="ta" value="0.00 mm" />
                  <button type="button" className={`col-start-2 h-7 ${BTN}`}>Apply axial</button>
                </div>
              </fieldset>
              <fieldset className="h-[226px] flex-[224] rounded border border-[#bcbcbc] px-3.5">
                <legend className="ml-0.5 px-1">Center:</legend>
                <div className="grid grid-cols-[20px_1fr] items-center gap-y-[9px] pt-2">
                  <label htmlFor="cx">X:</label><SpinBox id="cx" value="0.00 mm" />
                  <label htmlFor="cy">Y:</label><SpinBox id="cy" value="0.00 mm" />
                  <label htmlFor="cz">Z:</label><SpinBox id="cz" value="0.00 mm" />
                </div>
                <label className="mt-3 flex items-center gap-2.5 pl-0.5">
                  <input type="checkbox" className="size-[18px] appearance-none border-2 border-[#4a4a4a] bg-white" />
                  Use center of mass
                </label>
                <button type="button" className={`mt-[11px] h-7 w-full ${BTN}`}>Selected points</button>
              </fieldset>
            </div>
            <fieldset className="mt-3 h-20 rounded border border-[#bcbcbc] px-3.5">
              <legend className="ml-0.5 px-1 leading-3">Rotation:</legend>
            </fieldset>
          </div>
        </div>
        <div className="flex w-[17px] flex-col border border-[#b0b0b0] bg-[#e3e3e3]">
          <ArrowBtn up name="Scroll tasks up" />
          <div className="h-[136px] border-y border-[#b0b0b0] bg-linear-to-r from-[#f4f4f4] to-[#fdfdfd]" />
          <div className="flex-1 border-b border-[#b0b0b0]" />
          <ArrowBtn name="Scroll tasks down" />
        </div>
      </div>
    </section>
  );
}

/* ---------- 3D view ---------- */

const ROOF_LINES = "M205 183H745M290 148H830M375 118H905M460 104H998M122 211H662";

function Bunker() {
  return (
    <g transform="translate(870 440) scale(0.3333)" fill="none" strokeWidth="5">
      <path d="M122 211H662V452H122Z" fill="#76897a" />
      <path d="M591 211H662V452H591Z" fill="#82998a" />
      <path d="M122 211L205 183L290 148L375 115L460 104H998L905 120L830 148L745 186L662 211Z" fill="#536a73" />
      <path d="M591 104H998L905 120L830 148L745 186L662 211H591Z" fill="#5f7e88" />
      <path d="M662 211L745 186L830 148L905 120L998 106L1086 118L1168 148L1252 183L1338 211V452H662Z" fill="#a8bc93" />
      <path d={ROOF_LINES} stroke="#4c6f8d" />
      <path d="M122 452V211L205 183L290 148L375 115L460 104" stroke="#3f6486" />
      <path d="M662 452V211L745 186L830 148L905 120L998 106L1086 118L1168 148L1252 183L1338 211V452" stroke="#4f7699" />
      <path d="M932 263H1336V452H932Z" fill="#829e91" />
      <path d="M932 263L965 232L998 210H1268L1336 263Z" fill="#6a8990" />
      <path d="M932 452V263H1210M932 263L965 232H1235M965 232L998 210H1268M1230 279H1310" stroke="#4c7496" />
    </g>
  );
}

function Doorway() {
  return (
    <g transform="translate(870 440) scale(0.3333)" strokeWidth="5">
      <path fillRule="evenodd" d="M1200 453V263L1235 232L1268 211L1303 232L1336 263V453ZM1227 423H1309V279L1268 246L1227 279Z" fill="#c6a926" stroke="#151515" />
      <path d="M1257 428H1300L1259 434Z" fill="#b8b86a" />
      {[122, 662, 799, 932, 1066, 1200, 1336].map((x) => (
        <path key={x} d={`M${x - 5} 458H${x + 5}`} stroke="#889" strokeWidth="4" />
      ))}
    </g>
  );
}

function NavCube() {
  return (
    <g transform="translate(1720 0) scale(0.3333)" fill="#e4f2fe" stroke="#5d656c" strokeWidth="3" strokeLinejoin="round">
      <path d="M384 481L419 520H349ZM384 875L419 836H349ZM187 678L227 643V713ZM581 678L542 643V713Z" />
      <circle cx="556" cy="505" r="20" />
      <path d="M328 501L335 523Q295 536 266 561L278 570L235 585L243 538L252 549Q285 516 328 501Z" />
      <path d="M440 501L433 523Q473 536 502 561L490 570L533 585L525 538L516 549Q483 516 440 501Z" />
      <path d="M300 584H465L502 628V727L465 772H300L266 727V628Z" />
      <path d="M284 607H330L341 628V727L330 748H284L266 727V628Z" />
      <path d="M300 584L284 607M330 607L345 584H375L389 607L371 628H341ZM330 748L345 772H375L389 748L371 727H341ZM300 772L284 748M341 628H371V727H341Z" />
      <path d="M389 607H480L494 628V727L480 748H389L371 727V628Z" />
      <path d="M480 607L465 584M494 628L502 628M480 748L465 772M494 727H502M465 584L498 628M465 772L498 727" fill="none" />
      <path d="M488 802L519 789L550 800V835L519 848L488 837Z" stroke="#444" />
      <path d="M488 802L519 812L550 800M519 812V848" fill="none" stroke="#444" />
      <path d="M395 782H527" stroke="#ff5f66" strokeWidth="5" />
      <path d="M527 628V782" stroke="#55f25a" strokeWidth="5" />
      <text transform="translate(314 735) rotate(-90)" stroke="none" fill="#6b747c" fontFamily="DejaVu Sans" fontSize="34">RIGHT</text>
      <text transform="translate(487 668) rotate(180)" stroke="none" fill="#6b747c" fontFamily="DejaVu Sans Condensed" fontSize="28">BOTTOM</text>
    </g>
  );
}

function Viewport() {
  return (
    <div className="min-h-0 flex-1 bg-white">
      <svg viewBox="559 153 1361 787" preserveAspectRatio="xMinYMin meet" className="block h-full w-full" role="img" aria-label="3D view of the bunker model">
        <path d="M559 241H891V592H559Z" fill="#9dc8ea" />
        <path d="M891 241H1067V592H891Z" fill="#95bee1" />
        <path d="M1067 241H1518V592H1067Z" fill="#a0d0f5" />
        <Bunker />
        <path d="M891 241V592" stroke="#7cb8ea" strokeWidth="2" />
        <path d="M559 241H1518V591H559M1067 241V592" stroke="#80c4ff" strokeWidth="2" fill="none" />
        <Doorway />
        {[[891, 241], [1067, 241], [1518, 241], [891, 591], [1067, 591], [1518, 591]].map(([x, y]) => (
          <rect key={`${x}-${y}`} x={x - 2} y={y - 2} width="4" height="4" fill="#80c4ff" />
        ))}
        <NavCube />
        <g strokeWidth="2">
          <path d="M1881 902V882" stroke="#4aa04e" />
          <path d="M1881 875L1878 884H1884Z" fill="#188a1e" />
          <path d="M1882 902H1864" stroke="#b06468" />
          <path d="M1855 902L1865 898V906Z" fill="#8a1c1f" />
          <circle cx="1873" cy="902" r="2" fill="#3a1c8a" />
          <g fontFamily="Liberation Sans" fontSize="10" fontWeight="bold" fill="#000">
            <text x="1881" y="874">Y</text>
            <text x="1854" y="901">X</text>
            <text x="1870" y="901">Z</text>
          </g>
        </g>
      </svg>
    </div>
  );
}

const CloseX = () => (
  <svg viewBox="0 0 18 18" className="size-[18px]"><path d="M2 2L16 16M16 2L2 16" stroke="#868686" strokeWidth="3.500" /></svg>
);

function DocTabs() {
  return (
    <div className="flex h-[42px] shrink-0 items-start font-['Noto_Sans'] text-xs">
      <div className="flex h-[38px] w-[110px] items-center border border-[#b0b0b0] bg-linear-to-b from-[#d2d2d2] to-[#dcdcdc] pl-1.5 text-[#666]">
        <AppLogo />
        <button type="button" className="ml-3 flex-1 text-left">Start</button>
        <button type="button" aria-label="Close Start" className="mr-[9px] pt-1"><CloseX /></button>
      </div>
      <div className="flex h-[41px] w-[227px] items-center rounded-b-[3px] border border-t-0 border-[#a9a9a9] bg-linear-to-b from-[#f2f2f2] to-white pl-[5px]">
        <DocIcon />
        <button type="button" className="ml-[13px] flex-1 text-left">bunker with one solid : 1*</button>
        <button type="button" aria-label="Close bunker with one solid" className="mr-[9px]"><CloseX /></button>
      </div>
    </div>
  );
}

function StatusBar() {
  return (
    <footer className="flex h-[38px] shrink-0 items-center gap-[7px] pr-px font-['Noto_Sans'] text-xs">
      <p className="flex-1 pl-[3px]">Preselected: bunker_with_one_solid.Box.Edge9 (6538.24 mm, -600.00 mm, -10.00 m)</p>
      <button type="button" aria-label="Notifications" className={`flex h-8 w-[113px] items-center justify-between pl-0.5 pr-1 ${BTN}`}>
        <svg viewBox="0 0 18 16" className="h-4 w-[18px]">
          <rect width="18" height="16" fill="#2a4d80" />
          <rect x="1" y="1" width="16" height="14" fill="url(#blue)" />
          <path d="M3 2L9 8L16 2" stroke="#3f6ca5" fill="none" />
        </svg>
        <span className="mt-1 flex"><Down dark /></span>
      </button>
      <button type="button" className={`flex h-8 w-[113px] items-center pl-[31px] pr-1 ${BTN}`}>
        <svg viewBox="0 0 12 18" className="h-[18px] w-3" fill="none" stroke="#333"><rect x="1" y="1" width="10" height="16" rx="4" strokeWidth="2" /><path d="M6 4V8" strokeWidth="2" /></svg>
        <span className="ml-[7px] flex-1 text-left">CAD</span>
        <span className="mt-1 flex"><Down dark /></span>
      </button>
      <button type="button" className={`flex h-7 w-[132px] items-center justify-between whitespace-nowrap pl-1.5 pr-[3px] ${BTN}`}>
        77.83 m x 45.00 m
        <Down dark />
      </button>
    </footer>
  );
}

export default function App() {
  return (
    <div className="flex h-screen flex-col overflow-hidden bg-[#efefef] font-['Noto_Sans_Display','Noto_Sans',sans-serif] text-black">
      <Defs />
      <TitleBar />
      <MenuBar />
      <ToolbarTop />
      <ToolbarPart />
      <main className="flex min-h-0 flex-1">
        <aside className="flex w-[559px] shrink-0 flex-col">
          <DockHeader title="Model" closable />
          <div className="h-56 shrink-0">
            <ModelTree />
          </div>
          <PropertyPanel />
          <TasksPanel />
        </aside>
        <div className="flex min-w-0 flex-1 flex-col">
          <Viewport />
          <DocTabs />
        </div>
      </main>
      <StatusBar />
    </div>
  );
}
